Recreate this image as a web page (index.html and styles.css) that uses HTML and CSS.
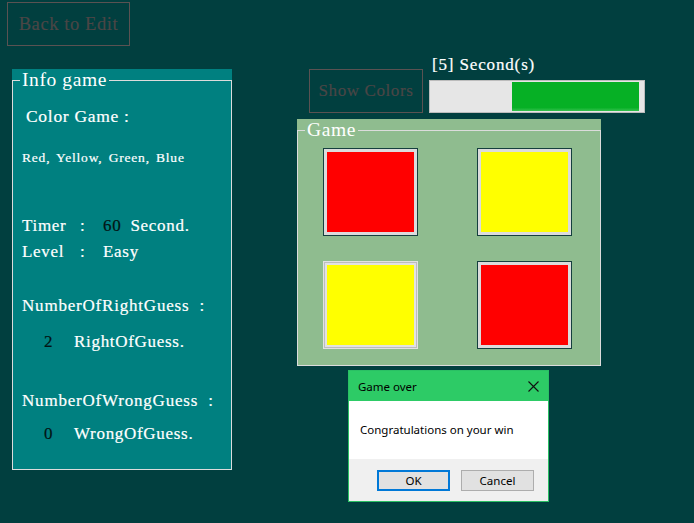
FILE: index.html
```html
<!DOCTYPE html>
<html>
<head>
<meta charset="utf-8">
<link rel="stylesheet" href="styles.css">
</head>
<body>
<div class="app">
  <div class="left">
    <button class="btn back">Back to Edit</button>
    <div class="panel info">
      <fieldset class="box">
        <legend>Info game</legend>
        <div class="content">
          <div class="row title">Color Game :</div>
          <div class="row colors">Red, Yellow, Green, Blue</div>
          <div class="row stat timer"><span>Timer</span><span>:</span><span><b class="num n60">60</b>Second.</span></div>
          <div class="row stat level"><span>Level</span><span>:</span><span>Easy</span></div>
          <div class="row head right-h">NumberOfRightGuess<span class="colon">:</span></div>
          <div class="row guess g-right"><b class="num">2</b><span>RightOfGuess.</span></div>
          <div class="row head wrong-h">NumberOfWrongGuess<span class="colon">:</span></div>
          <div class="row guess g-wrong"><b class="num">0</b><span>WrongOfGuess.</span></div>
        </div>
      </fieldset>
    </div>
  </div>
  <div class="right">
    <div class="toolbar">
      <button class="btn show">Show Colors</button>
      <div class="timerbox">
        <div class="tlabel">[5] Second(s)</div>
        <div class="progress"><div class="fill" style="width:127px"></div></div>
      </div>
    </div>
    <div class="panel game">
      <fieldset class="box">
        <legend>Game</legend>
        <div class="grid">
          <div class="tile"><div class="sw red"></div></div>
          <div class="tile"><div class="sw yellow"></div></div>
          <div class="tile plain"><div class="sw yellow"></div></div>
          <div class="tile"><div class="sw red"></div></div>
        </div>
      </fieldset>
    </div>
  </div>
</div>

<div class="dialog">
  <div class="dtitle">
    <span>Game over</span>
    <svg class="close" width="11" height="11" viewBox="0 0 11 11"><path d="M0.5 0.5 L10.5 10.5 M10.5 0.5 L0.5 10.5" stroke="#111" stroke-width="1.1" fill="none"/></svg>
  </div>
  <div class="dbody">Congratulations on your win</div>
  <div class="dfoot">
    <button class="dbtn ok">OK</button>
    <button class="dbtn">Cancel</button>
  </div>
</div>
</body>
</html>
```

FILE: styles.css
```css
* { box-sizing: border-box; }
html, body { margin: 0; padding: 0; }
body {
  width: 694px;
  height: 523px;
  background: #013f3f;
  font-family: "Liberation Serif", "Times New Roman", serif;
  color: #ffffff;
  letter-spacing: 0.7px;
  overflow: hidden;
  position: relative;
}
.app {
  display: flex;
  padding: 2px 0 0 7px;
}
.left {
  display: flex;
  flex-direction: column;
  align-items: flex-start;
  width: 225px;
}
.btn {
  background: transparent;
  border: 1px solid #5a5252;
  color: #4a4646;
  font-family: "Liberation Serif", "Times New Roman", serif;
  letter-spacing: 0.6px;
  padding: 0;
  margin: 0;
  -webkit-text-stroke: 0.2px #4a4646;
}
.back {
  width: 123px;
  height: 44px;
  font-size: 18.5px;
}
.panel { position: relative; }
.info {
  margin: 23px 0 0 5px;
  width: 220px;
  height: 401px;
  background: #008080;
}
.box {
  margin: 0;
  width: 100%;
  height: 100%;
  border: 1px solid #dcdcdc;
  padding: 0;
  min-width: 0;
}
.box legend {
  font-size: 19.5px;
  line-height: 22px;
  padding: 0 2px;
  margin-left: 7px;
  letter-spacing: 0.6px;
}
.content { padding-left: 9px; }
.row {
  font-size: 17px;
  line-height: 24px;
  white-space: nowrap;
  -webkit-text-stroke: 0.2px #ffffff;
}
.title { margin-top: 13px; padding-left: 4px; font-size: 17.5px; }
.colors { margin-top: 21px; font-size: 13.5px; line-height: 18px; letter-spacing: 0.8px; word-spacing: 2px; }
.stat {
  display: grid;
  grid-template-columns: 58px 23px auto;
}
.timer { margin-top: 47px; }
.level { margin-top: 2px; }
.num {
  font-weight: normal;
  color: #031414;
  display: inline-block;
  -webkit-text-stroke: 0.2px #031414;
}
.n60 { margin-right: 9px; }
.head { letter-spacing: 0.8px; }
.colon { margin-left: 10px; }
.right-h { margin-top: 30px; }
.wrong-h { margin-top: 35px; }
.guess {
  display: flex;
  padding-left: 22px;
}
.guess .num { width: 30px; }
.g-right { margin-top: 12px; }
.g-wrong { margin-top: 9px; }

.right {
  margin-left: 65px;
  display: flex;
  flex-direction: column;
  align-items: flex-start;
}
.toolbar {
  display: flex;
  align-items: flex-end;
  margin: 53px 0 0 12px;
}
.show {
  width: 114px;
  height: 44px;
  font-size: 17px;
}
.timerbox {
  margin-left: 6px;
  display: flex;
  flex-direction: column;
}
.tlabel {
  font-size: 17px;
  line-height: 20px;
  padding-left: 3px;
  letter-spacing: 0.85px;
  -webkit-text-stroke: 0.2px #ffffff;
}
.progress {
  margin-top: 5px;
  width: 216px;
  height: 33px;
  border: 1px solid #bcbcbc;
  background: #e6e6e6;
  display: flex;
  justify-content: flex-end;
  padding: 1px 5px 1px 0;
}
.fill {
  height: 100%;
  background: linear-gradient(#06b025 0, #06b025 88%, #34c04e 100%);
}
.game {
  margin-top: 6px;
  width: 304px;
  height: 247px;
  background: #8fbc8f;
}
.grid {
  display: grid;
  grid-template-columns: 95px 95px;
  grid-template-rows: 88px 88px;
  column-gap: 59px;
  row-gap: 25px;
  margin: 7px 0 0 25px;
}
.tile {
  border: 1px solid #153f3f;
  background: #dcdcdc;
  padding: 3px;
}
.tile.plain {
  border-color: transparent;
  box-shadow: inset 0 0 0 1px #bdbdbd;
  background: #e2e2e2;
}
.sw { width: 100%; height: 100%; }
.red { background: #ff0000; }
.yellow { background: #ffff00; }

.dialog {
  position: absolute;
  left: 348px;
  top: 370px;
  width: 201px;
  height: 132px;
  border: 1px solid #2ac064;
  background: #f0f0f0;
  font-family: "Noto Sans", "Open Sans", sans-serif;
  letter-spacing: 0;
  color: #000;
  display: flex;
  flex-direction: column;
}
.dtitle {
  height: 30px;
  background: #2dcb66;
  display: flex;
  align-items: center;
  justify-content: space-between;
  padding: 0 9px 0 9px;
  font-size: 11.5px;
}
.close { margin-top: 1px; }
.dbody {
  height: 58px;
  background: #ffffff;
  padding: 21px 0 0 11px;
  font-size: 11.5px;
  line-height: 16px;
}
.dfoot {
  display: flex;
  gap: 11px;
  padding: 11px 0 0 28px;
}
.dbtn {
  width: 73px;
  height: 21px;
  background: #e1e1e1;
  border: 1px solid #adadad;
  font-family: "Noto Sans", "Open Sans", sans-serif;
  font-size: 11.5px;
  padding: 0;
  margin: 0;
  color: #000;
}
.dbtn.ok { border: 2px solid #0078d7; }
```
